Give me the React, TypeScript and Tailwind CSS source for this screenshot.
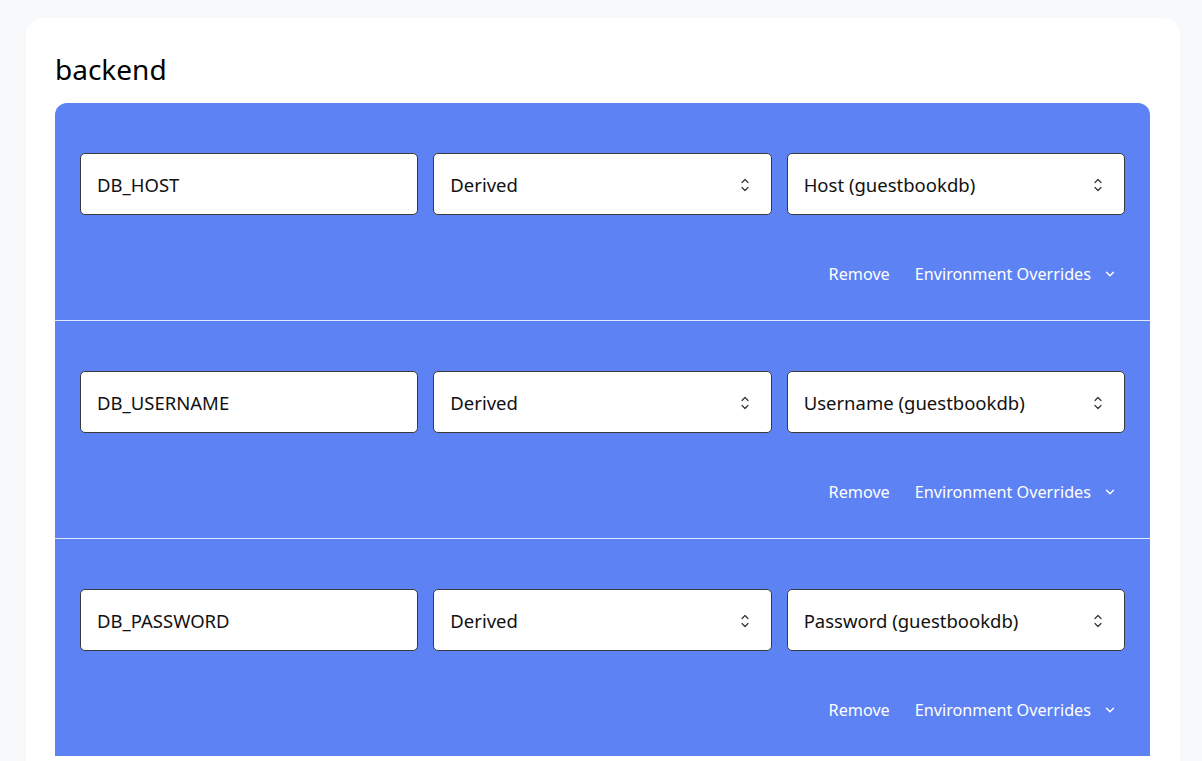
import { ChevronDown } from "lucide-react";

const rows = [
  { name: "DB_HOST", value: "Host (guestbookdb)" },
  { name: "DB_USERNAME", value: "Username (guestbookdb)" },
  { name: "DB_PASSWORD", value: "Password (guestbookdb)" },
];

function UpDown() {
  return (
    <svg width="10" height="18" viewBox="0 0 10 18" fill="none" stroke="#333" strokeWidth="1.2" strokeLinecap="round" strokeLinejoin="round">
      <path d="M2 6.5 L5 3.5 L8 6.5" />
      <path d="M2 11.5 L5 14.5 L8 11.5" />
    </svg>
  );
}

function SelectBox({ value }: { value: string }) {
  return (
    <div className="h-[62px] bg-white border border-[#3a3a3a] rounded-[5px] flex items-center justify-between pl-[16px] pr-[21px] pt-[2px] text-[18.5px] text-[#111]">
      <span>{value}</span>
      <UpDown />
    </div>
  );
}

export default function App() {
  return (
    <div className="min-h-screen bg-[#f8f9fb] pt-[18px] pl-[26px] pr-[22px]" style={{ fontFamily: '"Noto Sans", "Open Sans", sans-serif' }}>
      <div className="bg-white rounded-t-[16px] pl-[29px] pr-[30px] pt-[29px] min-h-[760px]">
        <h1 className="text-[28px] leading-[44px] text-black mb-[12px]">backend</h1>
        <div className="bg-[#5d82f4] rounded-t-[12px]">
          {rows.map((r, i) => (
            <div key={r.name} className={`px-[25px] pt-[50px] pb-[35px] ${i < rows.length - 1 ? "border-b border-white/80" : ""}`}>
              <div className="grid grid-cols-3 gap-[15px]">
                <div className="h-[62px] bg-white border border-[#3a3a3a] rounded-[5px] flex items-center pl-[16px] pt-[2px] text-[18.5px] text-[#111]">
                  {r.name}
                </div>
                <SelectBox value="Derived" />
                <SelectBox value={r.value} />
              </div>
              <div className="mt-[46px] h-[24px] flex items-center justify-end gap-[25px] pr-[8px] pt-[2px] text-[16.2px] text-white">
                <span>Remove</span>
                <span className="flex items-center gap-[12px]">
                  Environment Overrides
                  <ChevronDown size={14} strokeWidth={2.5} />
                </span>
              </div>
            </div>
          ))}
        </div>
      </div>
    </div>
  );
}
